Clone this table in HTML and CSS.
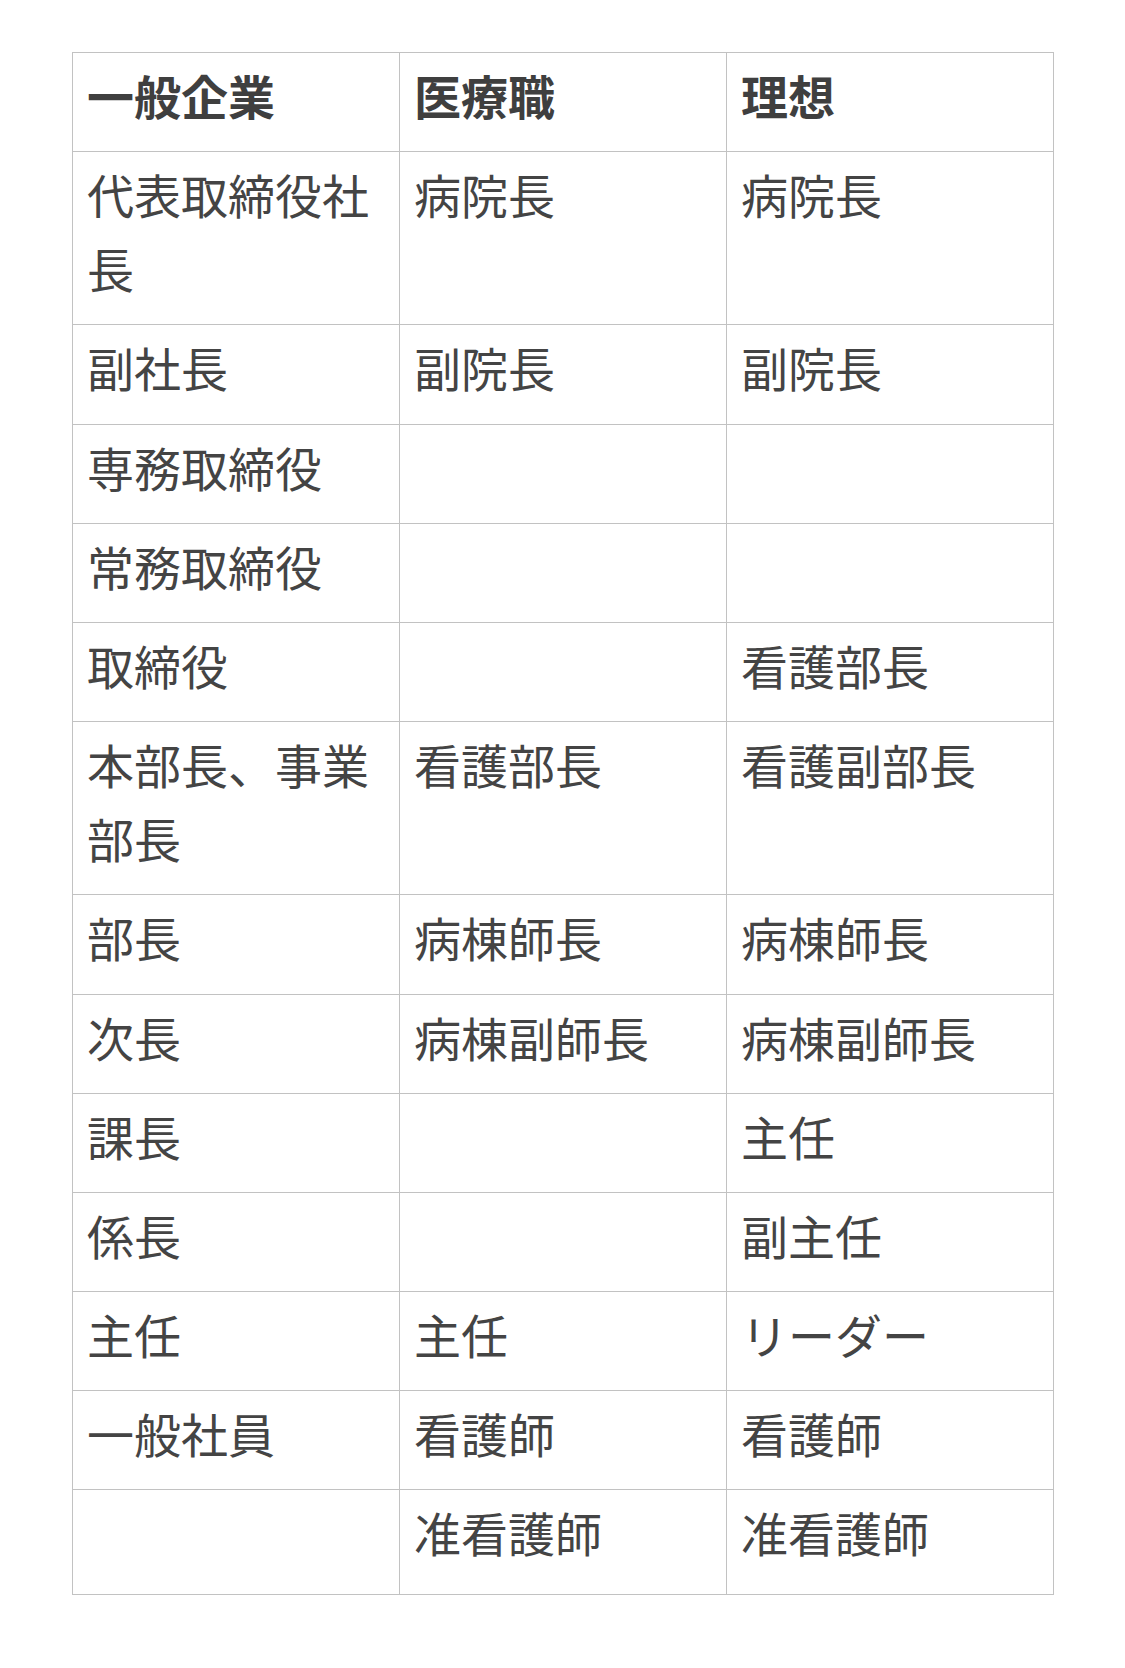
FILE: index.html
```html
<!DOCTYPE html>
<html lang="ja">
<head>
<meta charset="utf-8">
<link rel="stylesheet" href="styles.css">
</head>
<body>
<table class="grid">
  <thead>
    <tr><th>一般企業</th><th>医療職</th><th>理想</th></tr>
  </thead>
  <tbody>
    <tr><td>代表取締役社長</td><td>病院長</td><td>病院長</td></tr>
    <tr><td>副社長</td><td>副院長</td><td>副院長</td></tr>
    <tr><td>専務取締役</td><td></td><td></td></tr>
    <tr><td>常務取締役</td><td></td><td></td></tr>
    <tr><td>取締役</td><td></td><td>看護部長</td></tr>
    <tr><td>本部長、事業部長</td><td>看護部長</td><td>看護副部長</td></tr>
    <tr><td>部長</td><td>病棟師長</td><td>病棟師長</td></tr>
    <tr><td>次長</td><td>病棟副師長</td><td>病棟副師長</td></tr>
    <tr><td>課長</td><td></td><td>主任</td></tr>
    <tr><td>係長</td><td></td><td>副主任</td></tr>
    <tr><td>主任</td><td>主任</td><td>リーダー</td></tr>
    <tr><td>一般社員</td><td>看護師</td><td>看護師</td></tr>
    <tr class="last"><td></td><td>准看護師</td><td>准看護師</td></tr>
  </tbody>
</table>
</body>
</html>
```

FILE: styles.css
```css
html, body {
  margin: 0;
  padding: 0;
  background: #ffffff;
}
body {
  padding: 52px 0 0 72px;
  font-family: "Noto Sans CJK JP", "Noto Sans", sans-serif;
  color: #444444;
}
.grid {
  border-collapse: collapse;
  table-layout: fixed;
  width: 982px;
}
.grid th,
.grid td {
  border: 1px solid #c2c2c2;
  padding: 5px 14px 19.2px 14px;
  font-size: 47px;
  line-height: 74px;
  text-align: left;
  vertical-align: top;
  height: 74px;
  word-break: break-all;
}
.grid th {
  font-weight: 700;
  color: #3f3f3f;
}
.grid td {
  font-weight: 400;
}
.grid .last td {
  padding-bottom: 24.2px;
}
```
